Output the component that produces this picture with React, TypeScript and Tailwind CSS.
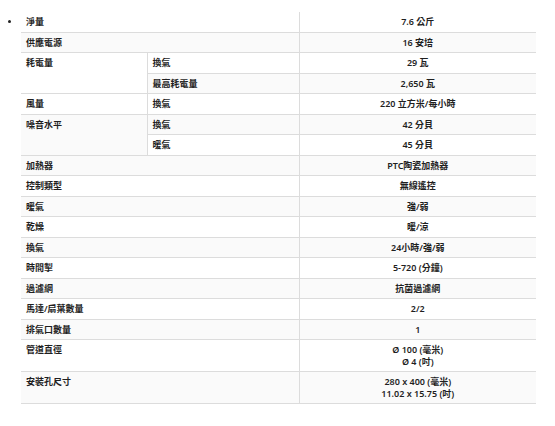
import React from "react";

type Row = {
  label?: string;
  labelSpan?: number;
  sub?: string;
  value: React.ReactNode;
};

const rows: Row[] = [
  { label: "淨量", value: "7.6 公斤" },
  { label: "供應電源", value: "16 安培" },
  { label: "耗電量", labelSpan: 2, sub: "換氣", value: "29 瓦" },
  { sub: "最高耗電量", value: "2,650 瓦" },
  { label: "風量", sub: "換氣", value: "220 立方米/每小時" },
  { label: "噪音水平", labelSpan: 2, sub: "換氣", value: "42 分貝" },
  { sub: "暖氣", value: "45 分貝" },
  { label: "加熱器", value: "PTC陶瓷加熱器" },
  { label: "控制類型", value: "無線遙控" },
  { label: "暖氣", value: "強/弱" },
  { label: "乾燥", value: "暖/涼" },
  { label: "換氣", value: "24小時/強/弱" },
  { label: "時間掣", value: "5-720 (分鐘)" },
  { label: "過濾網", value: "抗菌過濾網" },
  { label: "馬達/扇葉數量", value: "2/2" },
  { label: "排氣口數量", value: "1" },
  {
    label: "管道直徑",
    value: (
      <>
        Ø 100 (毫米)
        <br />Ø 4 (吋)
      </>
    ),
  },
  {
    label: "安裝孔尺寸",
    value: (
      <>
        280 x 400 (毫米)
        <br />
        11.02 x 15.75 (吋)
      </>
    ),
  },
];

const cell = "align-top px-[5px] pt-[4px] pb-[4px] border-b border-[#dcdcdc]";

export default function App() {
  return (
    <div
      className="w-[555px] h-[426px] bg-white text-[#1f1f1f] text-[9px] leading-[11.5px] font-semibold"
      style={{ fontFamily: '"Noto Sans", "Noto Sans CJK TC", sans-serif' }}
    >
      <div className="flex pt-[12px]">
        {/* bullet */}
        <div className="w-[21px] shrink-0 flex justify-end pr-[10px] pt-[8px]">
          <span className="block w-[3px] h-[3px] rounded-full bg-[#222]" />
        </div>

        <table className="w-[515px] border-collapse table-fixed">
          <colgroup>
            <col className="w-[126px]" />
            <col className="w-[152px]" />
            <col className="w-[237px]" />
          </colgroup>
          <tbody>
            {rows.map((r, i) => (
              <tr key={i} className={i % 2 === 1 ? "bg-[#fafafa]" : "bg-white"}>
                {r.label !== undefined && (
                  <td
                    className={cell}
                    colSpan={r.sub === undefined ? 2 : 1}
                    rowSpan={r.labelSpan ?? 1}
                  >
                    {r.label}
                  </td>
                )}
                {r.sub !== undefined && (
                  <td className={`${cell} border-l`}>{r.sub}</td>
                )}
                <td className={`${cell} border-l text-center`}>{r.value}</td>
              </tr>
            ))}
          </tbody>
        </table>
      </div>
    </div>
  );
}
